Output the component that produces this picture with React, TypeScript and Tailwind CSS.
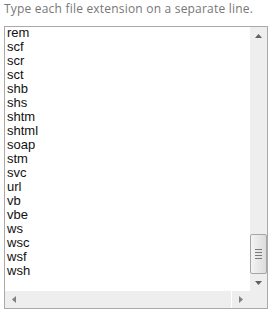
import React from "react";

const items = ["rem","scf","scr","sct","shb","shs","shtm","shtml","soap","stm","svc","url","vb","vbe","ws","wsc","wsf","wsh"];

export default function App() {
  return (
    <div className="w-[272px] h-[316px] bg-white overflow-hidden">
      <p className="pl-[4px] pt-[1px] h-[26px] text-[12px] leading-[16px] tracking-[0.2px] text-[#777]" style={{ fontFamily: '"Open Sans", sans-serif' }}>
        Type each file extension on a separate line.
      </p>
      <div className="ml-[4px] w-[264px] h-[283px] border border-[#a9a9a9] flex flex-col bg-white">
        <div className="flex flex-1 min-h-0">
          <div className="flex-1 overflow-hidden pl-[2px] text-[13px] leading-[14px] text-[#111]" style={{ fontFamily: '"Liberation Sans", Arial, sans-serif' }}>
            <div className="-mt-[1px]">
              {items.map((t) => (
                <div key={t} className="h-[14px]">{t}</div>
              ))}
            </div>
          </div>
          <div className="w-[17px] bg-[#eeeeee] flex flex-col">
            <div className="h-[17px] flex items-center justify-center">
              <svg width="7" height="4" viewBox="0 0 7 4"><path d="M0 4 L3.5 0 L7 4 Z" fill="#606060" /></svg>
            </div>
            <div className="flex-1" />
            <div className="h-[40px] mx-[0px] border border-[#a6a6a6] rounded-[2px] bg-gradient-to-r from-[#f4f4f4] to-[#dcdcdc] flex flex-col items-center justify-center gap-[2px]">
              <div className="w-[7px] h-[1px] bg-[#7a7a7a]" />
              <div className="w-[7px] h-[1px] bg-[#7a7a7a]" />
              <div className="w-[7px] h-[1px] bg-[#7a7a7a]" />
              <div className="w-[7px] h-[1px] bg-[#7a7a7a]" />
            </div>
            <div className="h-[17px] flex items-center justify-center">
              <svg width="7" height="4" viewBox="0 0 7 4"><path d="M0 0 L3.5 4 L7 0 Z" fill="#606060" /></svg>
            </div>
          </div>
        </div>
        <div className="flex h-[17px]">
          <div className="flex-1 bg-[#eeeeee] flex items-center">
            <div className="w-[17px] h-[17px] flex items-center justify-center">
              <svg width="4" height="7" viewBox="0 0 4 7"><path d="M4 0 L0 3.5 L4 7 Z" fill="#808080" /></svg>
            </div>
            <div className="flex-1 h-full border-r border-white" />
            <div className="w-[18px] h-[17px] flex items-center justify-center">
              <svg width="4" height="7" viewBox="0 0 4 7"><path d="M0 0 L4 3.5 L0 7 Z" fill="#808080" /></svg>
            </div>
          </div>
          <div className="w-[17px] bg-[#eeeeee]" />
        </div>
      </div>
    </div>
  );
}
